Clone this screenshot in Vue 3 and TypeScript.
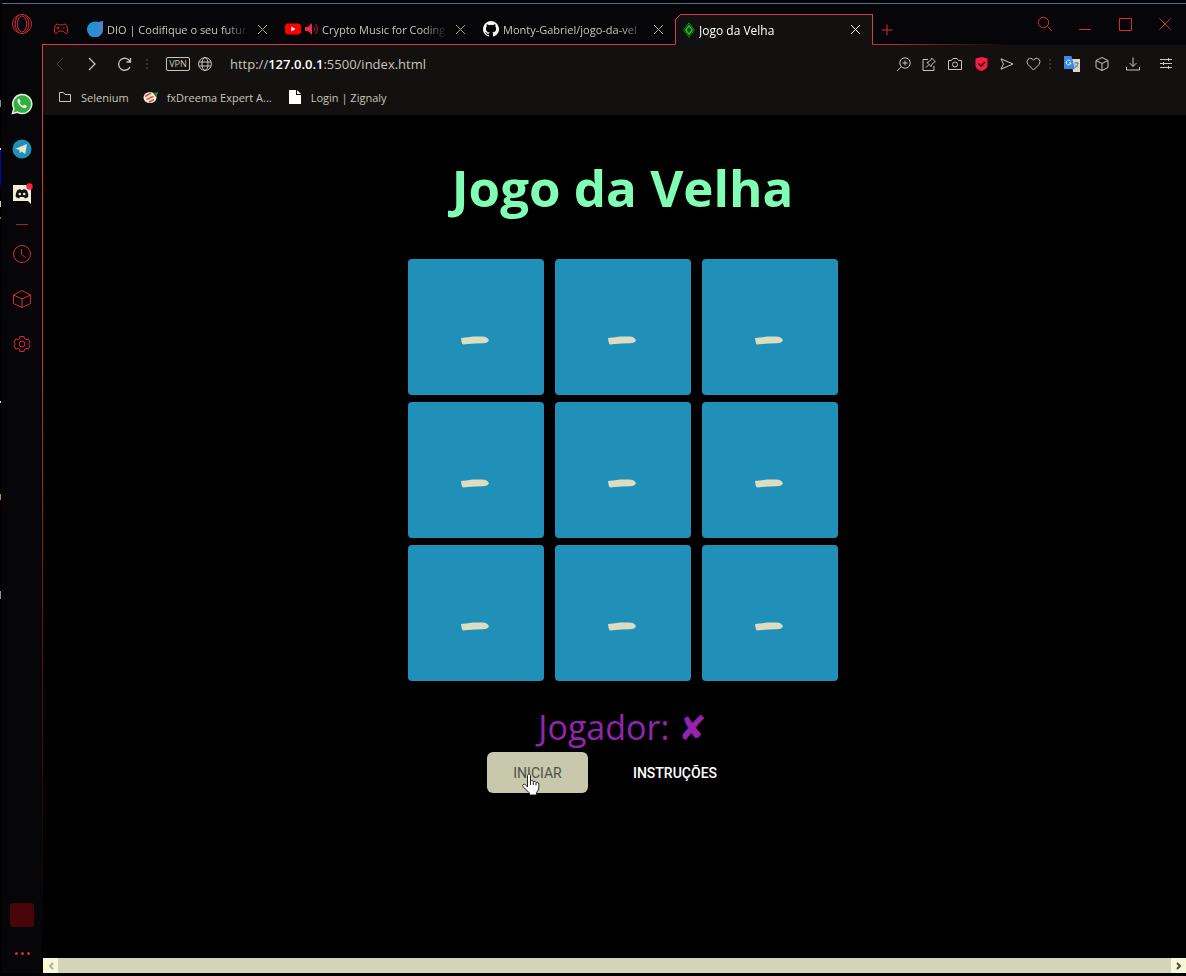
<script setup lang="ts">
import { ref } from 'vue'

type Cell = '-' | 'x' | 'o'

const cells = ref<Cell[]>(Array.from({ length: 9 }, () => '-' as Cell))
const tabs = [
  { id: 'dio', title: 'DIO | Codifique o seu futur' },
  { id: 'youtube', title: 'Crypto Music for Coding' },
  { id: 'github', title: 'Monty-Gabriel/jogo-da-vel' },
  { id: 'jogo', title: 'Jogo da Velha' },
]
const bookmarks = [
  { id: 'folder', title: 'Selenium' },
  { id: 'fx', title: 'fxDreema Expert A...' },
  { id: 'file', title: 'Login | Zignaly' },
]
const player = ref('✘')
</script>

<template>
  <div class="window">
    <aside class="sidebar">
      <button class="side opera" aria-label="Opera GX">
        <svg width="22" height="22" viewBox="0 0 22 22"><circle cx="11" cy="11" r="9.5" /><ellipse cx="11" cy="11" rx="4.5" ry="8" /><path d="M8 2.500C3 5 3 17 8 19.500M14 2.500c5 2.500 5 14.500 0 17" /></svg>
      </button>
      <button class="side" aria-label="WhatsApp">
        <svg width="22" height="22" viewBox="0 0 22 22"><path d="M1.500 20.500l1.400-5A9.500 9.500 0 1 1 6.500 19.200z" fill="#2fb040" stroke="#e4e8dc" stroke-width="1.600" /><path d="M7.500 5.800c-2 1.300-1 4 1.200 6.500 2.500 2.700 5.500 3.800 6.800 1.900.7-1.200.2-1.600-1.800-2.500-.9-.3-1.100.9-1.900 1-1.200-.3-2.800-2-3-2.900-.1-.6 1-.9.7-1.700-.8-1.900-1-2.600-2-2.300z" fill="#f0f2e8" stroke="none" /></svg>
      </button>
      <button class="side" aria-label="Telegram">
        <svg width="20" height="20" viewBox="0 0 20 20"><circle cx="10" cy="10" r="9.500" fill="#2090b8" stroke="none" /><path d="M3.500 9.700L15 5l-1.800 10-3.500-2.500-2 1.700-.2-3.300z" fill="#e8e4d0" stroke="none" /></svg>
      </button>
      <button class="side" aria-label="Discord">
        <svg width="22" height="22" viewBox="0 0 22 22"><path d="M2 2h18v19l-3-3H2z" fill="#f0edd8" stroke="none" /><path d="M6.500 7l3-1 .5 1h2l.5-1 3 1c1.500 2.200 2 4.500 1.700 7l-3.200 1.500-1-1.500H9l-1 1.500L4.800 14c-.3-2.500.2-4.800 1.700-7z" fill="#111" stroke="none" /><circle cx="8.800" cy="11" r="1.300" fill="#f0edd8" stroke="none" /><circle cx="13.200" cy="11" r="1.300" fill="#f0edd8" stroke="none" /><circle cx="18.500" cy="3.500" r="3.200" fill="#ff2040" stroke="none" /></svg>
      </button>
      <span class="divider"></span>
      <button class="side" aria-label="Histórico">
        <svg width="20" height="20" viewBox="0 0 20 20"><circle cx="10" cy="10" r="8.500" /><path d="M9.500 5v5l3.500 3.500" /></svg>
      </button>
      <button class="side" aria-label="Extensões">
        <svg width="20" height="20" viewBox="0 0 20 20"><path d="M10 1.500L18.500 6v8.500L10 18.500 1.500 14.500V6zM1.500 6l8.500 4 8.500-4M10 10v8.500" /></svg>
      </button>
      <button class="side" aria-label="Configurações">
        <svg width="18" height="18" viewBox="0 0 18 18"><path d="M7 1.500h4l.6 2.300 1.300.8 2.300-.7 2 3.500-1.700 1.600 1.700 1.600-2 3.500-2.300-.7-1.300.8-.6 2.300H7l-.6-2.300-1.300-.8-2.300.7-2-3.500L2.500 9 .8 7.400l2-3.500 2.300.7 1.300-.8z" /><circle cx="9" cy="9" r="3" /></svg>
      </button>
      <span class="spacer"></span>
      <span class="block"></span>
      <button class="side more" aria-label="Mais opções"><i></i><i></i><i></i></button>
    </aside>

    <div class="browser">
      <header class="tabbar">
        <button class="gx" aria-label="GX Corner">
          <svg width="16" height="14" viewBox="0 0 16 14"><path d="M3 2.500c2-.8 3 .5 5 .5s3-1.300 5-.5c1 .5 1.500 4 1.500 6.500 0 2-.5 2.500-1.500 2.500-1.500 0-2-2.500-3.500-2.500h-3C5 9 4.500 11.500 3 11.500c-1 0-1.500-.5-1.500-2.500C1.500 6.500 2 3 3 2.500zM3.500 6h3M5 4.500v3M10 6h1.500" /></svg>
        </button>
        <div v-for="t in tabs" :key="t.id" class="tab" :class="{ active: t.id === 'jogo' }">
          <svg v-if="t.id === 'dio'" width="16" height="16" viewBox="0 0 16 16"><path d="M16 0v8a8 8 0 1 1-7-7.500c2.500.8 5 0 7-.500z" fill="#2890d0" stroke="none" /><path d="M16 0v8c0 3-2 6-5 7V1c2 .3 3.500-.400 5-1z" fill="#4c80d0" stroke="none" /></svg>
          <svg v-else-if="t.id === 'youtube'" width="16" height="12" viewBox="0 0 16 12"><rect width="16" height="11" y=".5" rx="3" fill="#f00" stroke="none" /><path d="M6.300 3.500v5l4.200-2.500z" fill="#fff" stroke="none" /></svg>
          <svg v-else-if="t.id === 'github'" width="16" height="16" viewBox="0 0 16 16"><path d="M8 0a8 8 0 0 0-2.530 15.590c.4.070.55-.17.55-.38v-1.490c-2.230.48-2.690-.95-2.690-.95-.36-.92-.89-1.170-.89-1.170-.73-.5.050-.49.050-.49.810.060 1.230.83 1.230.83.72 1.230 1.880.87 2.340.67.070-.52.280-.88.510-1.080-1.780-.2-3.640-.89-3.640-3.950 0-.88.310-1.590.82-2.150-.08-.2-.36-1.020.08-2.120 0 0 .67-.21 2.200.82a7.600 7.600 0 0 1 4 0c1.530-1.040 2.200-.82 2.200-.82.440 1.100.160 1.920.080 2.120.51.560.82 1.270.82 2.150 0 3.070-1.870 3.750-3.650 3.950.29.250.54.730.54 1.480v2.200c0 .21.150.46.550.38A8 8 0 0 0 8 0z" fill="#f8f8f0" stroke="none" /></svg>
          <svg v-else width="12" height="16" viewBox="0 0 12 16"><path d="M6 .8L11.300 8 6 15.200.7 8z" stroke="#108018" /><path d="M6 3.800L9.300 8 6 12.200 2.700 8z" fill="#064010" stroke="#10c820" stroke-width="1.500" /></svg>
          <svg v-if="t.id === 'youtube'" class="speaker" width="13" height="12" viewBox="0 0 13 12"><path d="M0 4h3l4-4v12L3 8H0z" fill="#f02850" stroke="none" /><path d="M9 3.500c1 1.500 1 3.500 0 5M10.500 1c2.300 2.500 2.300 7.500 0 10" stroke="#c02040" /></svg>
          <span class="title">{{ t.title }}</span>
          <button class="close" :aria-label="'Fechar ' + t.title">
            <svg width="11" height="11" viewBox="0 0 11 11"><path d="M1 1l9 9M10 1l-9 9" /></svg>
          </button>
        </div>
        <button class="plus" aria-label="Nova guia">
          <svg width="12" height="12" viewBox="0 0 12 12"><path d="M6 .5v11M.5 6h11" /></svg>
        </button>
        <div class="controls">
          <button aria-label="Pesquisar"><svg width="16" height="16" viewBox="0 0 16 16"><circle cx="6.500" cy="6.500" r="5.200" /><path d="M10.500 10.500L15 15" /></svg></button>
          <button aria-label="Minimizar"><svg width="12" height="12" viewBox="0 0 12 12"><path d="M0 11.500h12" /></svg></button>
          <button aria-label="Maximizar"><svg width="13" height="13" viewBox="0 0 13 13"><path d="M.5.500h12v12H.500z" /></svg></button>
          <button aria-label="Fechar"><svg width="12" height="12" viewBox="0 0 12 12"><path d="M.5.500l11 11M11.500.500l-11 11" /></svg></button>
        </div>
      </header>

      <nav class="toolbar">
        <button class="nav dim" aria-label="Voltar"><svg width="8" height="14" viewBox="0 0 8 14"><path d="M7 1L1 7l6 6" /></svg></button>
        <button class="nav" aria-label="Avançar"><svg width="8" height="14" viewBox="0 0 8 14"><path d="M1 1l6 6-6 6" stroke-width="1.300" /></svg></button>
        <button class="nav" aria-label="Recarregar"><svg width="15" height="15" viewBox="0 0 15 15"><path d="M13 4.500A6 6 0 1 0 13 10M13.500 1v4h-4" stroke-width="1.300" /></svg></button>
        <span class="grip"></span>
        <button class="vpn">VPN</button>
        <svg class="globe" width="14" height="14" viewBox="0 0 14 14"><circle cx="7" cy="7" r="6.400" /><ellipse cx="7" cy="7" rx="3" ry="6.400" /><path d="M1 5h12M1 9h12" /></svg>
        <div class="url" role="textbox" aria-label="Endereço">http://<b>127.0.0.1</b>:5500/index.html</div>
        <div class="tools">
          <button aria-label="Zoom"><svg width="15" height="15" viewBox="0 0 15 15"><circle cx="9" cy="6" r="5.200" /><path d="M5.300 9.700L1 14M9 3.500v5M6.500 6h5" /></svg></button>
          <button aria-label="Fixar"><svg width="14" height="14" viewBox="0 0 14 14"><path d="M6 2.500H1v11h11V9M4 10.500l3-3M5 5.500l4 4 .8-2 2.700-2.500.8-.2-3.600-3.800-.2 1L7 4.700z" /></svg></button>
          <button aria-label="Captura"><svg width="14" height="14" viewBox="0 0 14 14"><path d="M.5 3.500h3l1.500-2h4l1.500 2h3v9H.500z" /><circle cx="7" cy="7.500" r="2.500" /></svg></button>
          <button aria-label="Bloqueador"><svg width="13" height="14" viewBox="0 0 13 14"><path d="M1 1.500L6.500 0 12.500 1.500v7c0 3-3 4.500-6 5.500-3-1-6-2.500-6-5.500v-7z" fill="#fa1e3e" stroke="none" /><path d="M3.500 6.500l2.500 2.500 4-4" stroke="#111" stroke-width="1.600" /></svg></button>
          <button aria-label="Meu Flow"><svg width="14" height="12" viewBox="0 0 14 12"><path d="M1 .8L13 6 1 11.200 3.500 6z" /></svg></button>
          <button aria-label="Favoritar"><svg width="15" height="14" viewBox="0 0 15 14"><path d="M7.500 13L2 7.500C-1 3 4-1 7.500 3 11-1 16 3 13 7.500z" /></svg></button>
          <span class="grip"></span>
          <button class="translate" aria-label="Traduzir"><svg width="16" height="16" viewBox="0 0 16 16"><path d="M8 3h8v13H9z" fill="#d8dad0" stroke="none" /><path d="M0 0h7.500L11 13H0z" fill="#3c88e8" stroke="none" /><path d="M6.500 5A2.400 2.400 0 1 0 7 7H5" stroke="#f0f0f0" /><path d="M10.500 7h4M12.500 6v1M14 7c-.5 2.500-1.500 3.500-3 4.500M11 8.500l3 3" stroke="#687078" /></svg></button>
          <button aria-label="Extensões"><svg width="14" height="14" viewBox="0 0 14 14"><path d="M7 .5l6 3v7l-6 3-6-3v-7zM1 3.500l6 3 6-3M7 6.500v7" /></svg></button>
          <button class="download" aria-label="Downloads"><svg width="14" height="14" viewBox="0 0 14 14"><path d="M7 .5v9M3.500 6L7 9.500 10.500 6M.5 10v3h13v-3" /></svg></button>
          <button class="setup" aria-label="Configuração rápida"><svg width="12" height="12" viewBox="0 0 12 12"><path d="M0 1.500h12M0 5.500h12M0 9.500h12M8.500 0v3M3.500 4v3M8.500 8v3" /></svg></button>
        </div>
      </nav>

      <nav class="bookmarks">
        <a v-for="b in bookmarks" :key="b.id" href="#" :class="b.id">
          <svg v-if="b.id === 'folder'" width="12" height="10" viewBox="0 0 12 10"><path d="M.5 9.500v-9h4l1.500 2h5.500v7z" /></svg>
          <svg v-else-if="b.id === 'fx'" width="16" height="12" viewBox="0 0 16 12"><ellipse cx="7" cy="6.500" rx="6.500" ry="5.500" fill="#f0ead8" stroke="none" /><path d="M2 5.500l6-3.500M3.500 8.500c2 0 4-3 7-3M6 11l5-2.500" stroke="#e05038" stroke-width="1.500" /><path d="M10 2l5.500-1L13 6z" fill="#288028" stroke="none" /></svg>
          <svg v-else width="12" height="14" viewBox="0 0 12 14"><path d="M0 0h7v5h5v9H0zM8 0l4 4H8z" fill="#fff" stroke="none" /></svg>
          <span>{{ b.title }}</span>
        </a>
      </nav>

      <main class="page">
        <h1>Jogo da Velha</h1>
        <div class="board">
          <button v-for="(c, i) in cells" :key="i" class="cell" :aria-label="'Casa ' + (i + 1)">
            <svg v-if="c === '-'" width="28" height="9" viewBox="0 0 28 9"><path d="M0 2L7 1.200 12 .500h9c4 .200 6 1.500 7 3.700-1 2-2.500 2.900-6 3l-8 .300-7 .500-5 .500C.5 7.500.500 5 0 2z" /></svg>
          </button>
        </div>
        <p class="player">Jogador: <span class="mark">{{ player }}</span></p>
        <div class="actions">
          <button class="start">INICIAR
            <svg class="cursor" width="18" height="23" viewBox="0 0 18 23"><path d="M5.500 14V2.500C5.500.5 8.500.5 8.500 2.500V8c1-.9 2.600-.5 2.800.7.900-.8 2.500-.4 2.700.8 1.100-.6 2.900 0 2.900 1.700 0 4-.2 6-2.400 8.300v2.500H7.500v-2C5 18 3 15.500 1 13.500c-1-1.500.8-3 2.300-2z" fill="#fff" stroke="#222" /><path d="M8.500 8v4M11.300 9v3M14 10v2.500" stroke="#222" /></svg>
          </button>
          <button class="help">INSTRUÇÕES</button>
        </div>
      </main>

      <footer class="scrollbar">
        <button aria-label="Rolar para a esquerda"><svg width="6" height="8" viewBox="0 0 6 8"><path d="M5 1L2 4l3 3" stroke="#b0b0a8" stroke-width="2" /></svg></button>
        <span class="thumb"></span>
        <button aria-label="Rolar para a direita"><svg width="6" height="8" viewBox="0 0 6 8"><path d="M1 1l3 3-3 3" stroke="#484848" stroke-width="2" /></svg></button>
      </footer>
    </div>
  </div>
</template>

<style>
html,
body {
  background: #000;
}
</style>

<style scoped>
.window {
  display: flex;
  box-sizing: border-box;
  min-height: 100vh;
  padding: 3px 0 3px 2px;
  background:
    linear-gradient(#000 100px, #889 100px 107px, #000 107px 148px, #ddd 148px 150px, #0000c0 150px 186px, #000 186px 201px, #ccc 201px 207px, #000 207px 217px, #a07020 217px 219px, #000 219px 401px, #ddd 401px 403px, #000 403px 494px, #c08040 494px 500px, #000 500px 591px, #8a9a8a 591px 599px, #000 599px) 0 0 / 1px 100% no-repeat,
    #000;
  font-family: "Open Sans", "Noto Sans", sans-serif;
  font-size: 12px;
  color: #c8c6bc;
}
button {
  display: flex;
  align-items: center;
  justify-content: center;
  margin: 0;
  padding: 0;
  border: 0;
  background: none;
  color: inherit;
  font: inherit;
}
svg {
  flex: none;
  display: block;
  fill: none;
  stroke: currentColor;
}
.sidebar {
  display: flex;
  flex-direction: column;
  align-items: center;
  flex: none;
  width: 40px;
  border-top: 1px solid #4078a0;
  background: #060608;
  color: #d82840;
}
.side {
  flex: none;
  width: 40px;
  height: 45px;
}
.side.opera {
  height: 40px;
  margin-bottom: 37px;
}
.divider {
  width: 12px;
  height: 1px;
  margin: 8px 0 6px;
  background: #a02038;
}
.spacer {
  flex: 1;
}
.block {
  width: 24px;
  height: 24px;
  border-radius: 3px;
  background: #48060a;
}
.side.more {
  height: 46px;
  padding-top: 6px;
  gap: 3px;
}
.more i {
  width: 3px;
  height: 3px;
  border-radius: 2px;
  background: #d82840;
}
.browser {
  display: flex;
  flex-direction: column;
  flex: 1;
  min-width: 0;
  background: linear-gradient(#d83850 40px, #c83040 300px, #601410 600px, #000 900px) 0 41px / 1px 100% no-repeat;
}
.tabbar {
  display: flex;
  align-items: flex-end;
  height: 41px;
  border-top: 1px solid #4078a0;
  background: #060608;
}
.gx {
  width: 39px;
  height: 31px;
  padding-right: 2px;
  border-bottom: 1px solid #d83850;
  box-sizing: border-box;
  color: #d82840;
}
.tab {
  position: relative;
  display: flex;
  align-items: center;
  box-sizing: border-box;
  flex: 0 1 198px;
  min-width: 0;
  height: 31px;
  padding: 0 11px 0 6px;
  gap: 4px;
  border-bottom: 1px solid #d83850;
  font-size: 11px;
}
.title {
  flex: 1;
  min-width: 0;
  padding-top: 1px;
  overflow: hidden;
  white-space: nowrap;
  line-height: 19px;
  mask-image: linear-gradient(90deg, #000 calc(100% - 24px), transparent);
}
.close {
  width: 12px;
  height: 16px;
  margin-left: 3px;
}
.tab .close {
  color: #a8a690;
}
.tab.active {
  padding-left: 7px;
  border: 1px solid #d83850;
  border-bottom-color: #121110;
  background: #121110;
  color: #fff;
  font-size: 12px;
}
.tab.active::before {
  content: "";
  position: absolute;
  left: -1px;
  top: -1px;
  width: 6px;
  height: 6px;
  background: linear-gradient(135deg, #060608 42%, #d83850 44% 54%, #121110 56%);
}
.tab.active .close {
  color: #fff;
}
.plus {
  width: 28px;
  height: 30px;
  color: #d82840;
}
.tabbar .plus {
  border-bottom: 1px solid #b82c40;
}
.controls {
  display: flex;
  flex: 1;
  justify-content: flex-end;
  height: 31px;
  padding-right: 1px;
  background: linear-gradient(90deg, #b02838, transparent 110px) 0 100% / 100% 1px no-repeat;
  color: #d82840;
}
.controls button {
  width: 40px;
  height: 20px;
}
.toolbar {
  display: flex;
  align-items: center;
  height: 38px;
  margin-left: 1px;
  padding-left: 1px;
  background: #121110;
}
.nav {
  width: 32px;
  height: 30px;
}
.dim {
  color: #46443c;
}
.grip {
  width: 14px;
  height: 12px;
  background: radial-gradient(circle, #34322c 1px, transparent 1px) center / 4px 4px repeat-y;
}
.vpn {
  box-sizing: border-box;
  width: 24px;
  height: 14px;
  margin-left: 12px;
  border: 1px solid #c8c6bc;
  border-radius: 2px;
  font-size: 9px;
  line-height: 12px;
}
.globe {
  margin: 0 18px 0 8px;
}
.url {
  flex: 1;
  min-width: 0;
  overflow: hidden;
  white-space: nowrap;
  font-size: 13px;
  line-height: 20px;
}
.url b {
  font-weight: 600;
  color: #fff;
}
.tools {
  display: flex;
  align-items: center;
  padding-right: 5px;
}
.tools button {
  width: 26px;
  height: 26px;
}
.tools .grip {
  width: 8px;
}
.tools .translate {
  width: 35px;
}
.tools .download {
  width: 36px;
}
.tools .setup {
  width: 30px;
}
.bookmarks {
  display: flex;
  align-items: center;
  height: 32px;
  margin-left: 1px;
  padding: 0 0 4px 16px;
  box-sizing: border-box;
  background: #121110;
  font-size: 11px;
}
.bookmarks a {
  display: flex;
  align-items: center;
  gap: 10px;
  margin-right: 14px;
  color: inherit;
  text-decoration: none;
  white-space: nowrap;
}
.bookmarks .fx {
  gap: 8px;
  margin-right: 17px;
}
.page {
  display: flex;
  flex-direction: column;
  align-items: center;
  flex: 1;
  margin-left: 1px;
  padding: 36px 0 24px 16px;
  background: #000;
}
h1 {
  margin: 0;
  color: #80ffb4;
  font-size: 51px;
  line-height: 72px;
  font-weight: 700;
}
.board {
  display: grid;
  grid-template-columns: repeat(3, 136px);
  gap: 7px 11px;
  margin-top: 36px;
}
.cell {
  height: 136px;
  padding: 26px 2px 0 0;
  border-radius: 4px;
  background: #2090b8;
}
.cell svg {
  fill: #dcdcc0;
  stroke: none;
}
.player {
  margin: 23px 0 0;
  color: #9424b0;
  font-size: 34px;
  line-height: 47px;
  font-weight: 400;
}
.mark {
  font-family: "DejaVu Sans", sans-serif;
}
.actions {
  display: flex;
  gap: 18px;
  padding-right: 14px;
  font-family: Roboto, sans-serif;
  font-size: 14px;
  color: #fff;
}
.start {
  position: relative;
  width: 101px;
  height: 41px;
  border-radius: 6px;
  background: #c8c8ac;
  color: #505048;
}
.cursor {
  position: absolute;
  left: 35px;
  top: 21px;
}
.help {
  width: 138px;
  height: 41px;
  font-weight: 500;
}
.scrollbar {
  display: flex;
  height: 15px;
  margin-left: 1px;
  background: #f8f8d8;
}
.scrollbar button {
  width: 15px;
}
.thumb {
  flex: 1;
  background: #d4d4b8;
}
</style>
